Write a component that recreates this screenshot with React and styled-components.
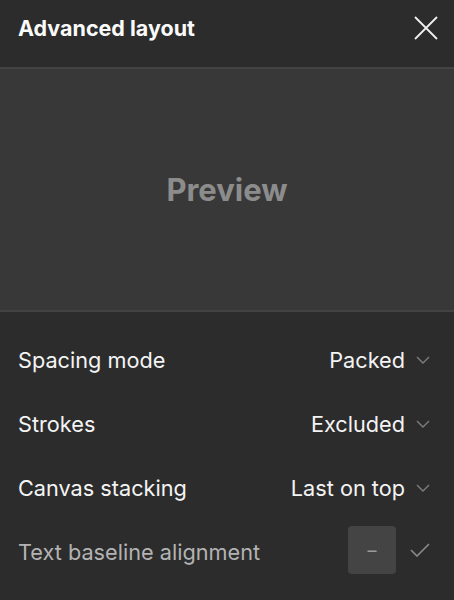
import React from 'react';
import styled, { createGlobalStyle } from 'styled-components';

const Global = createGlobalStyle`
	body {
		margin: 0;
		background: #2c2c2c;
		font-family: Inter, "Noto Sans", sans-serif;
	}
`
const Panel = styled.div`
	width: 454px;
	height: 600px;
	background: #2c2c2c;
	color: #f2f2f2;
	display: flex;
	flex-direction: column;
`
const Header = styled.div`
	height: 69px;
	display: flex;
	align-items: center;
	justify-content: space-between;
	padding: 0 16px 12px 18px;
	box-sizing: border-box;
	border-bottom: 2px solid #434343;
	flex-shrink: 0;
`
const Title = styled.h1`
	margin: 0;
	font-size: 21.5px;
	font-weight: 700;
	color: #fafafa;
`
const Close = styled.button`
	background: none;
	border: 0;
	padding: 0;
	width: 24px;
	height: 24px;
	display: flex;
	color: #f0f0f0;
`
const Preview = styled.div`
	height: 241px;
	background: #383838;
	border-bottom: 2px solid #434343;
	display: flex;
	align-items: center;
	justify-content: center;
	font-size: 31px;
	font-weight: 700;
	color: #8c8c8c;
	flex-shrink: 0;
`
const Rows = styled.div`
	padding: 16px 24px 0 18px;
	display: flex;
	flex-direction: column;
`
const Row = styled.div`
	height: 64px;
	display: flex;
	align-items: center;
	justify-content: space-between;
	font-size: 21.7px;
`
const Label = styled.span`
	color: ${p => p.$muted ? '#b3b3b3' : '#f4f4f4'};
`
const Value = styled.div`
	display: flex;
	align-items: center;
	gap: 11px;
	color: #f4f4f4;
`
const Toggle = styled.div`
	display: flex;
	align-items: center;
	gap: 14px;
	margin-top: -4px;
`
const Box = styled.div`
	width: 48px;
	height: 48px;
	border-radius: 4px;
	background: #444444;
	display: flex;
	align-items: center;
	justify-content: center;
	color: #9a9a9a;
	font-size: 18px;
`

const Chevron = () => (
	<svg width="14" height="14" viewBox="0 0 14 14" fill="none" stroke="#7d7d7d" strokeWidth="1.4">
		<path d="M1 4l6 6 6-6" />
	</svg>
)

const Check = () => (
	<svg width="20" height="14" viewBox="0 0 20 14" fill="none" stroke="#8a8a8a" strokeWidth="1.6">
		<path d="M1 7l6 6L19 1" />
	</svg>
)

const rows = [
	{ label: 'Spacing mode', value: 'Packed' },
	{ label: 'Strokes', value: 'Excluded' },
	{ label: 'Canvas stacking', value: 'Last on top' },
]

export default function App() {
	return (
		<Panel>
			<Global />
			<Header>
				<Title>Advanced layout</Title>
				<Close>
					<svg width="24" height="24" viewBox="0 0 24 24" fill="none" stroke="currentColor" strokeWidth="1.8">
						<path d="M1 1l22 22M23 1L1 23" />
					</svg>
				</Close>
			</Header>
			<Preview>Preview</Preview>
			<Rows>
				{rows.map(r => (
					<Row key={r.label}>
						<Label>{r.label}</Label>
						<Value>{r.value}<Chevron /></Value>
					</Row>
				))}
				<Row>
					<Label $muted>Text baseline alignment</Label>
					<Toggle>
						<Box>–</Box>
						<Check />
					</Toggle>
				</Row>
			</Rows>
		</Panel>
	)
}
